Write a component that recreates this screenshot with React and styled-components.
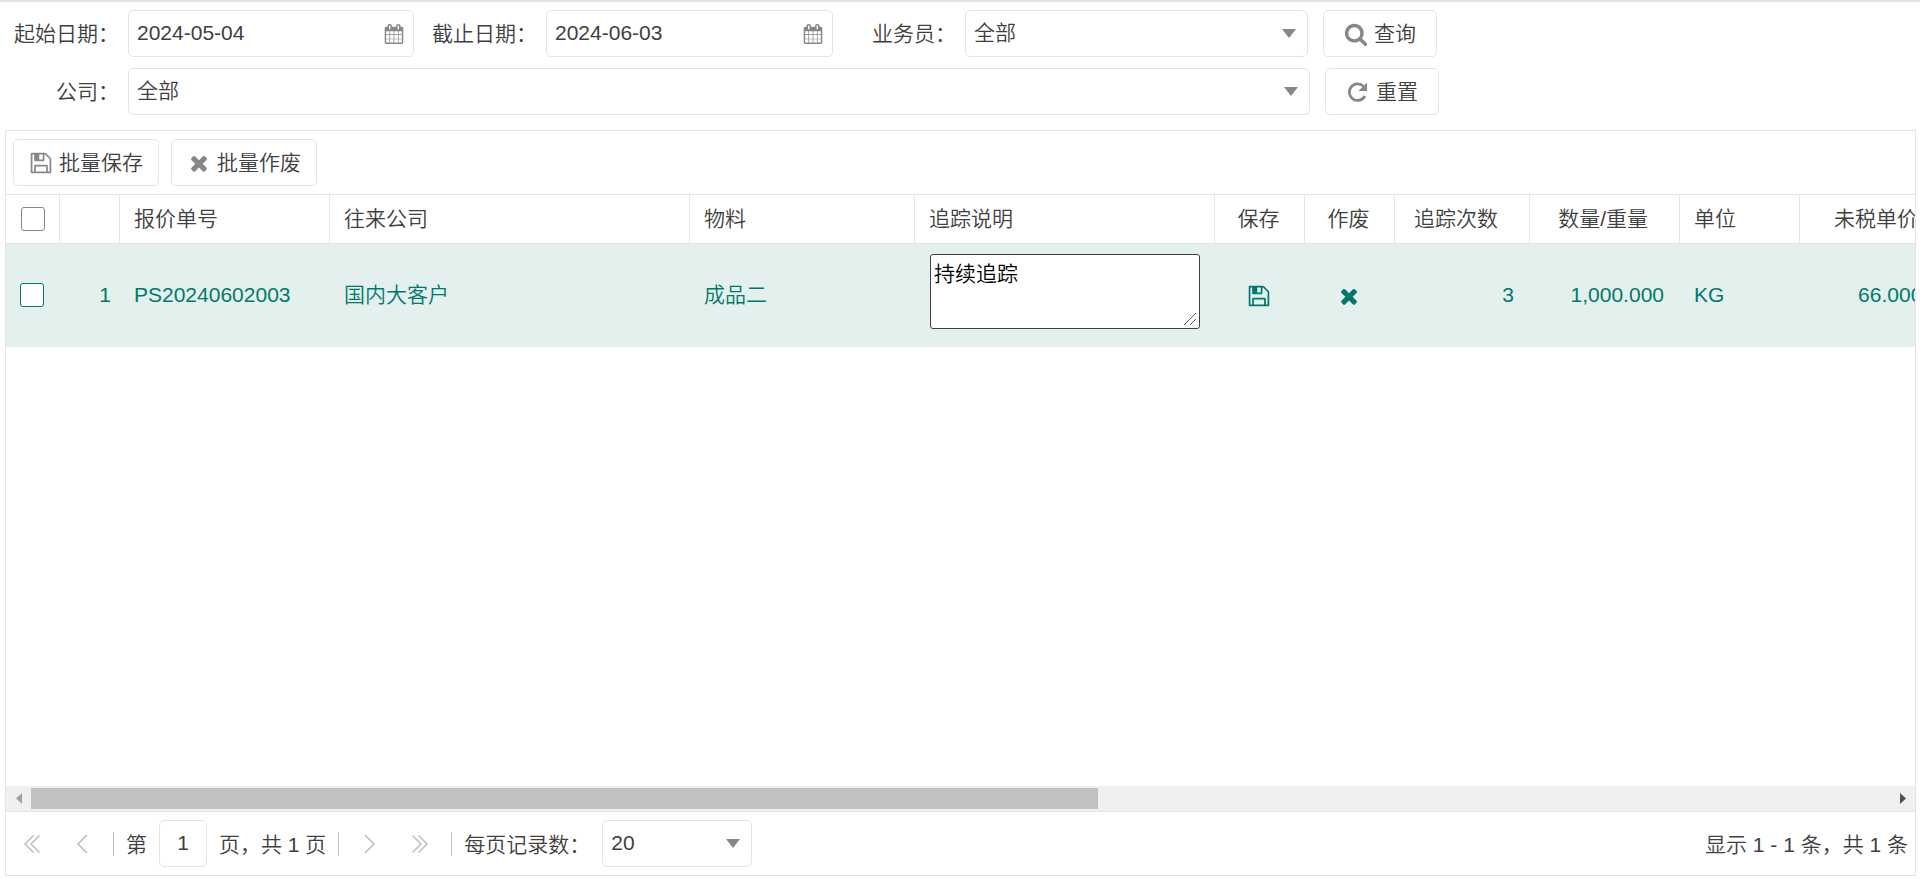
import { useState } from "react";
import styled, { createGlobalStyle } from "styled-components";

const GlobalStyle = createGlobalStyle`
  * {
    box-sizing: border-box;
  }
  body {
    margin: 0;
    background-color: #fff;
  }
  body, button, input, select, textarea {
    font-family: "Liberation Sans", "Noto Sans CJK SC", sans-serif;
    font-size: 21px;
    font-weight: 350;
    line-height: 30px;
    color: #404040;
  }
`;

const Page = styled.div`
  display: flex;
  flex-direction: column;
  height: 100vh;
  padding: 8px 4px 3px 5px;
  border-top: 2px solid #e1e1e1;
`;
const Filters = styled.form`
  display: flex;
  flex-direction: column;
  gap: 11px;
  margin-bottom: 15px;
`;
const FilterRow = styled.div`
  display: flex;
  align-items: center;
`;
const Label = styled.label`
  width: ${(p) => (p.$first ? "114px" : "123px")};
  margin-right: 9px;
  text-align: right;
  white-space: nowrap;
`;
const Field = styled.div`
  display: flex;
  align-items: center;
  width: ${(p) => p.$width}px;
  height: 47px;
  padding-right: ${(p) => (p.$date ? "9px" : "11px")};
  border: 1px solid #e4e4e4;
  border-radius: 5px;
  color: #878787;
  input,
  select {
    flex: 1;
    min-width: 0;
    height: 45px;
    padding: 0 0 1px 8px;
    border: none;
    outline: none;
    background: none;
    appearance: none;
  }
`;
const Button = styled.button`
  display: flex;
  align-items: center;
  justify-content: center;
  gap: 6px;
  width: ${(p) => p.$width}px;
  height: 47px;
  margin-left: ${(p) => p.$gap || 0}px;
  padding: 0;
  border: 1px solid #e4e4e4;
  border-radius: 5px;
  background-color: #fff;
  cursor: pointer;
  svg {
    color: #878787;
  }
`;
const Panel = styled.section`
  display: flex;
  flex: 1;
  flex-direction: column;
  min-height: 0;
  border: 1px solid #e4e4e4;
`;
const Toolbar = styled.div`
  display: flex;
  gap: 12px;
  padding: 8px 7px;
  border-bottom: 1px solid #e4e4e4;
`;
const GridBody = styled.div`
  flex: 1;
  min-height: 0;
  overflow: hidden;
`;
const Table = styled.table`
  width: 1944px;
  table-layout: fixed;
  border-collapse: separate;
  border-spacing: 0;
  th,
  td {
    border-right: 1px solid #e4e4e4;
    border-bottom: 1px solid #e4e4e4;
    font-weight: 350;
    white-space: nowrap;
  }
`;
const Th = styled.th`
  height: 49px;
  padding: 0 ${(p) => (p.$align === "right" ? "31px" : "14px")} 0
    ${(p) => (p.$align === "center" ? "12px" : p.$check ? "15px" : "14px")};
  text-align: ${(p) => p.$align || "left"};
`;
const Td = styled.td`
  height: 103px;
  padding: 0 ${(p) => p.$right || (p.$align === "center" ? 12 : 15)}px 0
    ${(p) => (p.$align === "center" ? "10px" : "14px")};
  background-color: #e4f0ee;
  color: #00796b;
  text-align: ${(p) => p.$align || "left"};
  && {
    border-color: #e9eeee;
  }
`;
const CheckBox = styled.input`
  display: block;
  width: 24px;
  height: 24px;
  margin: 0;
  border: 1px solid ${(p) => (p.$active ? "#00796b" : "#878787")};
  border-radius: 3px;
  background-color: #fff;
  appearance: none;
`;
const Note = styled.textarea`
  display: block;
  width: 270px;
  height: 75px;
  margin: 0 0 8px 1px;
  padding: 4px 3px 3px;
  border: 1px solid #404040;
  border-radius: 3px;
  background-color: #fff;
  color: #000;
  &::-webkit-resizer {
    background: linear-gradient(
        135deg,
        transparent 46%,
        #555 46% 53%,
        transparent 53% 72%,
        #555 72% 79%,
        transparent 79%
      )
      0 0 / 12px 12px no-repeat;
  }
`;
const IconButton = styled.button`
  display: inline-flex;
  align-items: center;
  justify-content: center;
  padding: 0;
  border: none;
  background: none;
  color: ${(p) => p.$color || "#c0c0c0"};
  vertical-align: middle;
  cursor: pointer;
`;
const ScrollBar = styled.div`
  display: flex;
  align-items: center;
  height: 25px;
  background-color: #f0f0f0;
`;
const ScrollArrow = styled(IconButton)`
  width: 25px;
  height: 25px;
`;
const ScrollTrack = styled.div`
  flex: 1;
`;
const ScrollThumb = styled.div`
  width: 57.4%;
  height: 21px;
  background-color: #c1c1c1;
`;
const Pager = styled.nav`
  display: flex;
  align-items: center;
  height: 64px;
  padding: 0 7px 0 1px;
  border-top: 1px solid #e4e4e4;
`;
const PageButton = styled(IconButton)`
  width: 50px;
  height: 46px;
`;
const Divider = styled.span`
  width: 1px;
  height: 24px;
  margin: 0 ${(p) => p.$after}px 0 ${(p) => p.$before}px;
  background-color: #c0c0c0;
`;
const PageInput = styled.input`
  width: 48px;
  height: 47px;
  margin: 0 12px;
  padding: 0 0 1px;
  border: 1px solid #e4e4e4;
  border-radius: 5px;
  text-align: center;
`;
const PagerLabel = styled.label`
  padding-top: 2px;
  margin-right: ${(p) => p.$gap || 0}px;
`;
const PagerText = styled.span`
  padding-top: 2px;
  margin-left: ${(p) => (p.$end ? "auto" : 0)};
`;

const icons = {
  save: "M512 1536h768v-384h-768v384zm896 0h128v-896q0-14-10-38.5t-20-34.5l-281-281q-10-10-34-20t-39-10v416q0 40-28 68t-68 28h-576q-40 0-68-28t-28-68v-416h-128v1280h128v-416q0-40 28-68t68-28h832q40 0 68 28t28 68v416zm-384-928v-320q0-13-9.5-22.5t-22.5-9.5h-192q-13 0-22.5 9.5t-9.5 22.5v320q0 13 9.5 22.5t22.5 9.5h192q13 0 22.5-9.5t9.5-22.5zm640 32v928q0 40-28 68t-68 28h-1344q-40 0-68-28t-28-68v-1344q0-40 28-68t68-28h928q40 0 88 20t76 48l280 280q28 28 48 76t20 88z",
  close: "M1490 1322q0 40-28 68l-136 136q-28 28-68 28t-68-28l-294-294-294 294q-28 28-68 28t-68-28l-136-136q-28-28-28-68t28-68l294-294-294-294q-28-28-28-68t28-68l136-136q28-28 68-28t68 28l294 294 294-294q28-28 68-28t68 28l136 136q28 28 28 68t-28 68l-294 294 294 294q28 28 28 68z",
  calendar:
    "M192 1664h288v-288h-288v288zm352 0h320v-288h-320v288zm-352-352h288v-320h-288v320zm352 0h320v-320h-320v320zm-352-384h288v-288h-288v288zm736 736h320v-288h-320v288zm-384-736h320v-288h-320v288zm768 736h288v-288h-288v288zm-384-352h320v-320h-320v320zm-352-864v-288q0-13-9.5-22.5t-22.5-9.5h-64q-13 0-22.5 9.5t-9.5 22.5v288q0 13 9.5 22.5t22.5 9.5h64q13 0 22.5-9.5t9.5-22.5zm736 864h288v-320h-288v320zm-384-384h320v-288h-320v288zm384 0h288v-288h-288v288zm32-480v-288q0-13-9.5-22.5t-22.5-9.5h-64q-13 0-22.5 9.5t-9.5 22.5v288q0 13 9.5 22.5t22.5 9.5h64q13 0 22.5-9.5t9.5-22.5zm384-64v1280q0 52-38 90t-90 38h-1408q-52 0-90-38t-38-90v-1280q0-52 38-90t90-38h128v-96q0-66 47-113t113-47h64q66 0 113 47t47 113v96h384v-96q0-66 47-113t113-47h64q66 0 113 47t47 113v96h128q52 0 90 38t38 90z",
  search:
    "M1216 832q0-185-131.5-316.5t-316.5-131.5-316.5 131.5-131.5 316.5 131.5 316.5 316.5 131.5 316.5-131.5 131.5-316.5zm512 832q0 52-38 90t-90 38q-54 0-90-38l-343-342q-179 124-399 124-143 0-273.5-55.5t-225-150-150-225-55.5-273.5 55.5-273.5 150-225 225-150 273.5-55.5 273.5 55.5 225 150 150 225 55.5 273.5q0 220-124 399l343 343q37 37 37 90z",
};

function Icon({ name, size = 24 }) {
  return (
    <svg width={size} height={size} viewBox="0 0 1792 1792" fill="currentColor" aria-hidden="true">
      <path d={icons[name]} />
    </svg>
  );
}

function ResetIcon() {
  return (
    <svg width="24" height="24" viewBox="0 0 24 24" fill="none" aria-hidden="true">
      <path d="M17.500 6.200A8.300 8.300 0 1 0 19 16" stroke="currentColor" strokeWidth="2.700" />
      <path d="M21 2.500v8.500h-8.500z" fill="currentColor" />
    </svg>
  );
}

function Caret() {
  return (
    <svg width="14" height="9" viewBox="0 0 14 9" fill="currentColor" aria-hidden="true">
      <path d="M0 0h14L7 9z" />
    </svg>
  );
}

function Chevron({ right, double }) {
  return (
    <svg width="18" height="20" viewBox="0 0 18 20" fill="none" stroke="currentColor" strokeWidth="1.6" aria-hidden="true">
      <g transform={right ? "rotate(180 9 10)" : undefined}>
        {double ? <path d="M10.500 1.500L2 10l8.500 8.500M16.500 1.500L8 10l8.500 8.500" /> : <path d="M14 1L5 10l9 9" />}
      </g>
    </svg>
  );
}

function ScrollTriangle({ right }) {
  return (
    <svg width="6" height="11" viewBox="0 0 6 11" fill="currentColor" aria-hidden="true">
      <path d={right ? "M0 0v11l6-5.500z" : "M6 0v11L0 5.500z"} />
    </svg>
  );
}

const columns = [
  { key: "check", width: 54 },
  { key: "no", width: 60 },
  { key: "code", title: "报价单号", width: 210 },
  { key: "partner", title: "往来公司", width: 360 },
  { key: "item", title: "物料", width: 225 },
  { key: "note", title: "追踪说明", width: 300 },
  { key: "save", title: "保存", width: 90, align: "center" },
  { key: "void", title: "作废", width: 90, align: "center" },
  { key: "times", title: "追踪次数", width: 135, align: "right" },
  { key: "qty", title: "数量/重量", width: 150, align: "right" },
  { key: "unit", title: "单位", width: 120 },
  { key: "price", title: "未税单价", width: 150, align: "right" },
];

const rows = [
  {
    code: "PS20240602003",
    partner: "国内大客户",
    item: "成品二",
    note: "持续追踪",
    times: "3",
    qty: "1,000.000",
    unit: "KG",
    price: "66.0000",
  },
];

function Row({ row, index }) {
  const [note, setNote] = useState(row.note);
  return (
    <tr>
      <Td>
        <CheckBox type="checkbox" $active aria-label={row.code} />
      </Td>
      <Td $align="right" $right={8}>
        {index + 1}
      </Td>
      <Td>{row.code}</Td>
      <Td>{row.partner}</Td>
      <Td>{row.item}</Td>
      <Td>
        <Note aria-label="追踪说明" value={note} onChange={(e) => setNote(e.target.value)} />
      </Td>
      <Td $align="center">
        <IconButton $color="#00796b" aria-label="保存">
          <Icon name="save" />
        </IconButton>
      </Td>
      <Td $align="center">
        <IconButton $color="#00796b" aria-label="作废">
          <Icon name="close" />
        </IconButton>
      </Td>
      <Td $align="right">{row.times}</Td>
      <Td $align="right">{row.qty}</Td>
      <Td>{row.unit}</Td>
      <Td $align="right">{row.price}</Td>
    </tr>
  );
}

export default function App() {
  return (
    <Page>
      <GlobalStyle />
      <Filters onSubmit={(e) => e.preventDefault()}>
        <FilterRow>
          <Label $first htmlFor="start">起始日期：</Label>
          <Field $width={286} $date>
            <input id="start" defaultValue="2024-05-04" />
            <Icon name="calendar" size={20} />
          </Field>
          <Label htmlFor="end">截止日期：</Label>
          <Field $width={287} $date>
            <input id="end" defaultValue="2024-06-03" />
            <Icon name="calendar" size={20} />
          </Field>
          <Label htmlFor="sales">业务员：</Label>
          <Field $width={343}>
            <select id="sales">
              <option>全部</option>
            </select>
            <Caret />
          </Field>
          <Button type="submit" $width={114} $gap={15}>
            <Icon name="search" />
            查询
          </Button>
        </FilterRow>
        <FilterRow>
          <Label $first htmlFor="company">公司：</Label>
          <Field $width={1182}>
            <select id="company">
              <option>全部</option>
            </select>
            <Caret />
          </Field>
          <Button type="reset" $width={114} $gap={15}>
            <ResetIcon />
            重置
          </Button>
        </FilterRow>
      </Filters>
      <Panel>
        <Toolbar>
          <Button type="button" $width={146}>
            <Icon name="save" />
            批量保存
          </Button>
          <Button type="button" $width={146}>
            <Icon name="close" />
            批量作废
          </Button>
        </Toolbar>
        <GridBody>
          <Table>
            <colgroup>
              {columns.map((c) => (
                <col key={c.key} width={c.width} />
              ))}
            </colgroup>
            <thead>
              <tr>
                {columns.map((c) => (
                  <Th key={c.key} $align={c.align} $check={c.key === "check"}>
                    {c.key === "check" ? <CheckBox type="checkbox" aria-label="全选" /> : c.title}
                  </Th>
                ))}
              </tr>
            </thead>
            <tbody>
              {rows.map((row, i) => (
                <Row key={row.code} row={row} index={i} />
              ))}
            </tbody>
          </Table>
        </GridBody>
        <ScrollBar>
          <ScrollArrow $color="#a3a3a3" aria-label="向左滚动">
            <ScrollTriangle />
          </ScrollArrow>
          <ScrollTrack>
            <ScrollThumb />
          </ScrollTrack>
          <ScrollArrow $color="#505050" aria-label="向右滚动">
            <ScrollTriangle right />
          </ScrollArrow>
        </ScrollBar>
        <Pager>
          <PageButton aria-label="首页">
            <Chevron double />
          </PageButton>
          <PageButton aria-label="上一页">
            <Chevron />
          </PageButton>
          <Divider $before={6} $after={12} />
          <PagerLabel htmlFor="page">第</PagerLabel>
          <PageInput id="page" defaultValue="1" />
          <PagerText>页，共 1 页</PagerText>
          <Divider $before={12} $after={6} />
          <PageButton aria-label="下一页">
            <Chevron right />
          </PageButton>
          <PageButton aria-label="末页">
            <Chevron right double />
          </PageButton>
          <Divider $before={6} $after={12} />
          <PagerLabel htmlFor="size" $gap={12}>每页记录数：</PagerLabel>
          <Field $width={150}>
            <select id="size">
              <option>20</option>
            </select>
            <Caret />
          </Field>
          <PagerText $end>显示 1 - 1 条，共 1 条</PagerText>
        </Pager>
      </Panel>
    </Page>
  );
}
